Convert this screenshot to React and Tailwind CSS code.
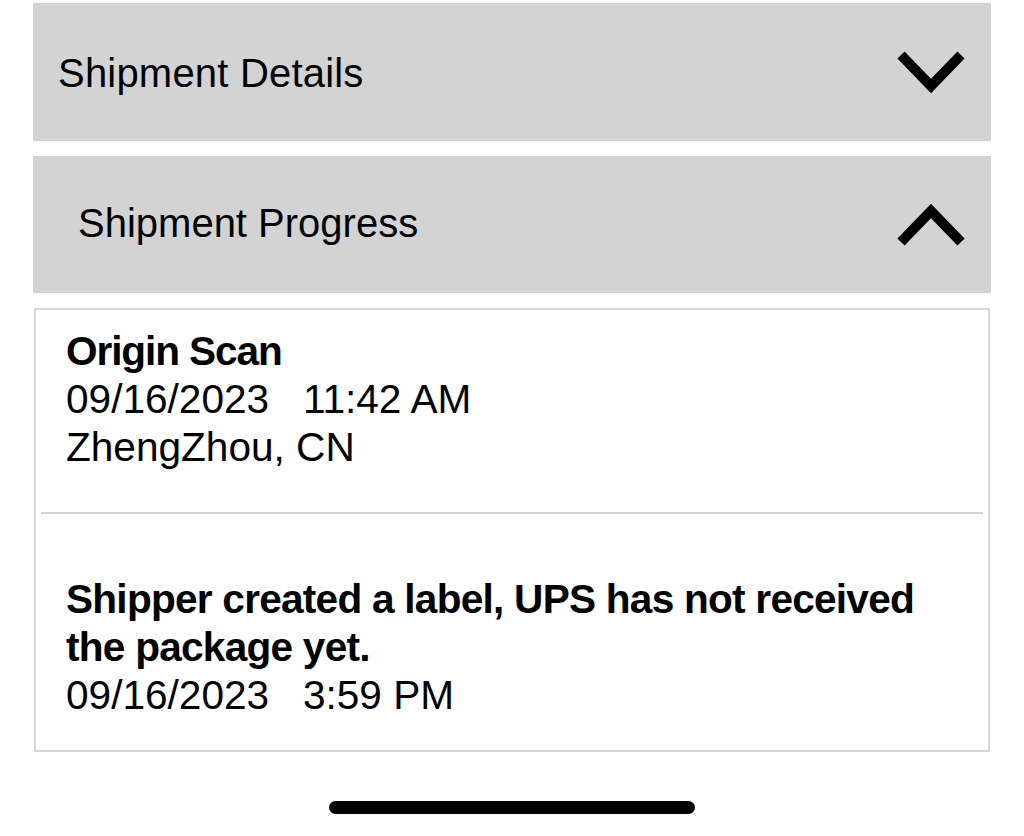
import React from "react";

function Chevron({ up }) {
  return (
    <svg width="68" height="44" viewBox="0 0 68 44" className="block">
      <polyline
        points={up ? "4,39 34,8 64,39" : "4,5 34,36 64,5"}
        fill="none"
        stroke="#000"
        strokeWidth="10"
        strokeLinejoin="miter"
        strokeLinecap="butt"
      />
    </svg>
  );
}

export default function App() {
  return (
    <div
      className="w-[1024px] h-[836px] bg-white text-black flex flex-col"
      style={{ fontFamily: '"Liberation Sans", Arial, sans-serif' }}
    >
      <div className="flex flex-col px-[33px] pt-[3px]">
        <div className="h-[138px] bg-[#d3d3d3] flex items-center justify-between pl-[25px] pr-[26px]">
          <span className="text-[40px] leading-none tracking-[0.2px] mt-[1px]">Shipment Details</span>
          <Chevron />
        </div>
        <div className="h-[137px] mt-[15px] bg-[#d3d3d3] flex items-center justify-between pl-[45px] pr-[26px]">
          <span className="text-[40px] leading-none -mt-[4px]">Shipment Progress</span>
          <Chevron up />
        </div>
        <div className="mt-[15px] mx-[1px] h-[444px] border-2 border-[#d6d6d6] flex flex-col">
          <div className="px-[30px] pt-[17px] text-[40.6px] leading-[48px]">
            <div className="font-bold tracking-[-1.1px]">Origin Scan</div>
            <div className="whitespace-pre">09/16/2023   11:42 AM</div>
            <div>ZhengZhou, CN</div>
          </div>
          <div className="mx-[5px] mt-[41px] h-[2px] bg-[#d6d1cc]" />
          <div className="px-[30px] pt-[61px] text-[40.6px] leading-[48px]">
            <div className="font-bold tracking-[-0.75px]">
              Shipper created a label, UPS has not received
              <br />
              the package yet.
            </div>
            <div className="whitespace-pre">09/16/2023   3:59 PM</div>
          </div>
        </div>
      </div>
      <div className="flex justify-center mt-[49px]">
        <div className="w-[366px] h-[13px] rounded-full bg-black" />
      </div>
    </div>
  );
}
